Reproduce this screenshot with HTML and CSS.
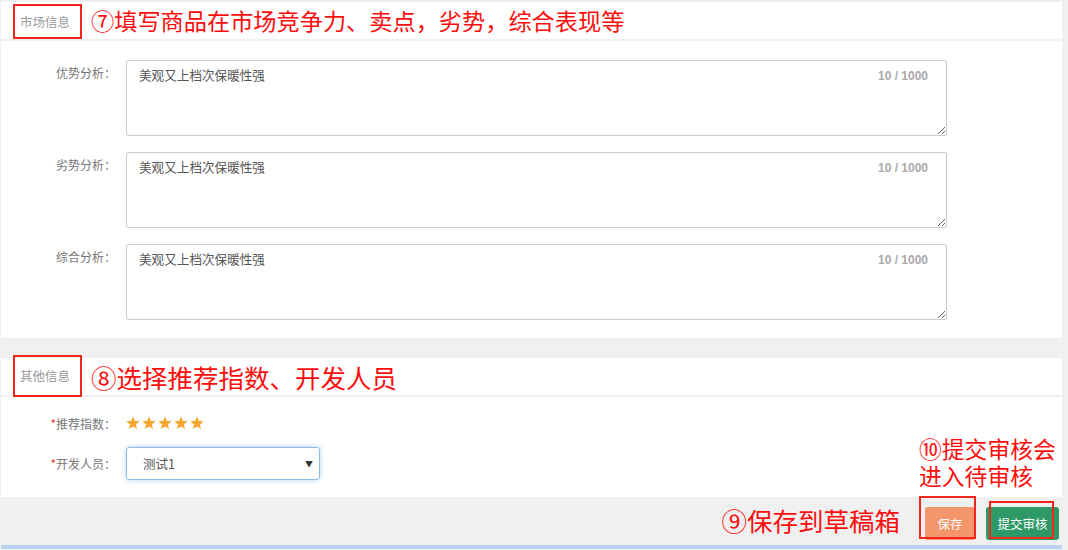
FILE: index.html
```html
<!DOCTYPE html>
<html lang="zh-CN">
<head>
    <meta charset="UTF-8">
    <title>商品信息</title>
    <link rel="stylesheet" href="styles.css">
</head>
<body>
    <div class="page">
        <!-- 市场信息 -->
        <div class="section">
            <div class="section-head">
                <span class="section-title">市场信息</span>
                <span class="note note-top">⑦填写商品在市场竞争力、卖点，劣势，综合表现等</span>
            </div>
            <div class="section-body market">
                <div class="form-row">
                    <label class="form-label">优势分析：</label>
                    <div class="area-wrap">
                        <textarea class="area">美观又上档次保暖性强</textarea>
                        <span class="counter">10 / 1000</span>
                    </div>
                </div>
                <div class="form-row">
                    <label class="form-label">劣势分析：</label>
                    <div class="area-wrap">
                        <textarea class="area">美观又上档次保暖性强</textarea>
                        <span class="counter">10 / 1000</span>
                    </div>
                </div>
                <div class="form-row">
                    <label class="form-label">综合分析：</label>
                    <div class="area-wrap">
                        <textarea class="area">美观又上档次保暖性强</textarea>
                        <span class="counter">10 / 1000</span>
                    </div>
                </div>
            </div>
        </div>

        <!-- 其他信息 -->
        <div class="section section-other">
            <div class="section-head">
                <span class="section-title title-tall">其他信息</span>
                <span class="note note-big">⑧选择推荐指数、开发人员</span>
            </div>
            <div class="section-body other">
                <div class="form-row row-stars">
                    <label class="form-label"><i class="req">*</i>推荐指数：</label>
                    <div class="stars">
                        <svg viewBox="0 0 14 14"><polygon points="7,0.6 8.9,5 13.6,5.3 10,8.4 11.1,13.1 7,10.6 2.9,13.1 4,8.4 0.4,5.3 5.1,5"/></svg>
                        <svg viewBox="0 0 14 14"><polygon points="7,0.6 8.9,5 13.6,5.3 10,8.4 11.1,13.1 7,10.6 2.9,13.1 4,8.4 0.4,5.3 5.1,5"/></svg>
                        <svg viewBox="0 0 14 14"><polygon points="7,0.6 8.9,5 13.6,5.3 10,8.4 11.1,13.1 7,10.6 2.9,13.1 4,8.4 0.4,5.3 5.1,5"/></svg>
                        <svg viewBox="0 0 14 14"><polygon points="7,0.6 8.9,5 13.6,5.3 10,8.4 11.1,13.1 7,10.6 2.9,13.1 4,8.4 0.4,5.3 5.1,5"/></svg>
                        <svg viewBox="0 0 14 14"><polygon points="7,0.6 8.9,5 13.6,5.3 10,8.4 11.1,13.1 7,10.6 2.9,13.1 4,8.4 0.4,5.3 5.1,5"/></svg>
                    </div>
                </div>
                <div class="form-row row-select">
                    <label class="form-label"><i class="req">*</i>开发人员：</label>
                    <div class="select">
                        <span>测试1</span>
                        <span class="arrow">▼</span>
                    </div>
                    <div class="note note-side">⑩提交审核会<br>进入待审核</div>
                </div>
            </div>
        </div>

        <!-- 底部操作 -->
        <div class="actions">
            <span class="note note-big">⑨保存到草稿箱</span>
            <button class="btn btn-save">保存<i class="mark mark-save"></i></button>
            <button class="btn btn-submit">提交审核<i class="mark mark-submit"></i></button>
        </div>
    </div>
</body>
</html>
```

FILE: styles.css
```css
body {
    margin: 0;
    background-color: #f0f0f0;
    font-family: "Noto Sans CJK SC", "Liberation Sans", sans-serif;
    font-size: 12px;
    color: #666;
}
.page {
    width: 1061px;
    margin-left: 1px;
    padding-top: 2px;
    border-bottom: 4px solid #b5d3ee;
}
.section {
    background-color: #fff;
}
.section-other {
    margin-top: 20px;
}
.section-head {
    display: flex;
    align-items: flex-end;
    height: 37px;
    border-bottom: 2px solid #f0f0f0;
}
.section-title {
    box-sizing: border-box;
    height: 35px;
    margin-left: 12px;
    padding: 0 10px 0 5px;
    border: 2px solid #f3261c;
    color: #999;
    font-size: 12.5px;
    line-height: 31px;
}
.title-tall {
    height: 42px;
    line-height: 38px;
    margin-bottom: -2px;
}
.note {
    color: #ff0d0d;
    font-size: 22px;
    line-height: 27px;
    white-space: nowrap;
}
.note-top {
    margin-left: 9px;
    font-size: 23.2px;
    align-self: center;
}
.note-big {
    font-size: 25.5px;
    margin-left: 9px;
    align-self: center;
}
.section-body.market {
    padding: 19px 0 18px;
}
.form-row {
    display: flex;
    align-items: flex-start;
    margin-bottom: 16px;
}
.form-row:last-child {
    margin-bottom: 0;
}
.form-label {
    width: 115px;
    padding-right: 10px;
    text-align: right;
    padding-top: 6px;
    color: #777;
    font-size: 12px;
    line-height: 14px;
}
.req {
    font-style: normal;
    color: #e23b2e;
}
.area-wrap {
    position: relative;
}
.area {
    display: block;
    box-sizing: border-box;
    width: 821px;
    height: 76px;
    margin: 0;
    padding: 5px 12px;
    border: 1px solid #ccc;
    border-radius: 2px;
    font-family: inherit;
    font-size: 12.6px;
    color: #555;
    line-height: 18px;
}
.counter {
    position: absolute;
    top: 9px;
    right: 19px;
    font-family: "Liberation Sans", sans-serif;
    font-size: 12px;
    font-weight: bold;
    color: #aaa;
}
.section-body.other {
    padding: 16px 0 18px;
    height: 66px;
}
.row-stars {
    align-items: center;
    height: 20px;
    margin-bottom: 14px;
}
.row-stars .form-label {
    padding-top: 2px;
}
.stars {
    display: flex;
    gap: 2px;
}
.stars svg {
    width: 14px;
    height: 14px;
    fill: #f6a630;
}
.row-select {
    align-items: center;
    position: relative;
}
.row-select .form-label {
    padding-top: 0;
}
.select {
    box-sizing: border-box;
    width: 194px;
    height: 33px;
    display: flex;
    align-items: center;
    justify-content: space-between;
    padding: 0 6px 0 16px;
    border: 1px solid #8ebbe8;
    border-radius: 3px;
    box-shadow: 0 0 5px rgba(102, 175, 233, 0.55);
    color: #555;
    font-size: 12.5px;
}
.arrow {
    font-size: 8px;
    color: #333;
}
.note-side {
    position: absolute;
    left: 918px;
    top: -12px;
    font-size: 22.8px;
}
.actions {
    display: flex;
    align-items: center;
    justify-content: flex-end;
    height: 48px;
    padding-right: 3px;
}
.actions .note {
    margin-right: 25px;
    margin-bottom: 4px;
}
.btn {
    position: relative;
    height: 33px;
    border: none;
    border-radius: 3px;
    color: #fff;
    font-family: inherit;
    font-size: 12.5px;
    padding: 0;
    margin-top: 4px;
}
.btn-save {
    width: 50px;
    background-color: #f5956c;
}
.btn-submit {
    width: 73px;
    margin-left: 11px;
    background-color: #2d9967;
}
.mark {
    position: absolute;
    border: 2px solid #f3261c;
    pointer-events: none;
}
.mark-save {
    left: -6px;
    top: -11px;
    width: 53px;
    height: 39px;
}
.mark-submit {
    left: 3px;
    top: -6px;
    width: 61px;
    height: 34px;
}
```
